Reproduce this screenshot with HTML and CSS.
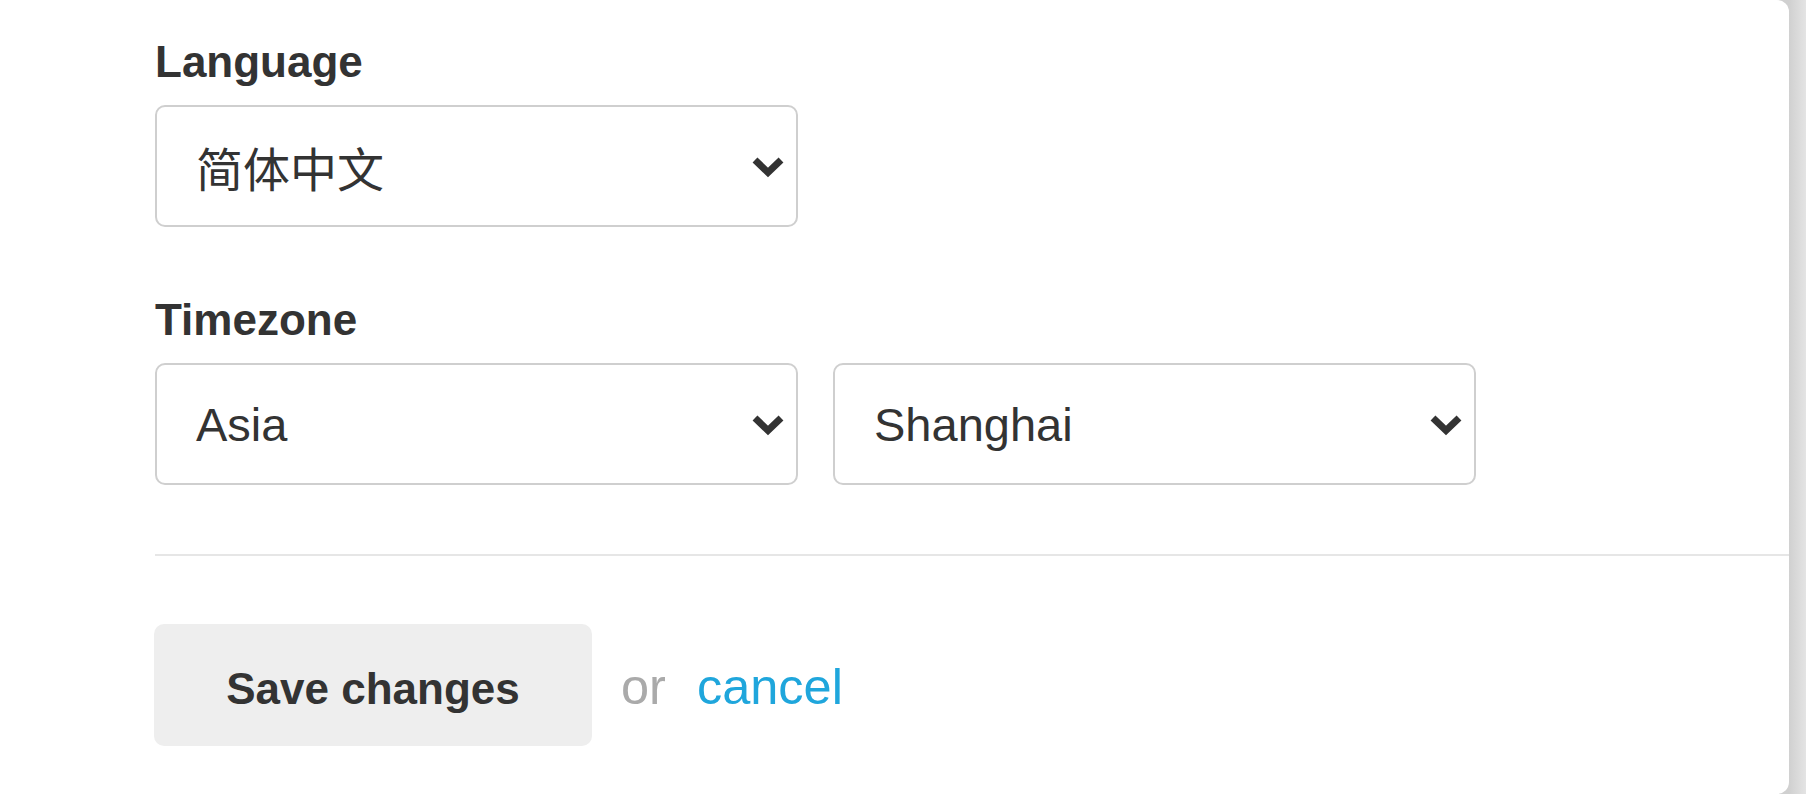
FILE: index.html
```html
<!DOCTYPE html>
<html lang="en">
<head>
<meta charset="utf-8">
<title>Settings</title>
<link rel="stylesheet" href="styles.css">
</head>
<body>
<div class="card">
  <div class="field">
    <div class="label">Language</div>
    <div class="select"><span class="value cjk">简体中文</span><svg class="chev" width="32" height="22" viewBox="0 0 32 22"><path d="M3 4 L16 16.5 L29 4" /></svg></div>
  </div>
  <div class="field">
    <div class="label">Timezone</div>
    <div class="row">
      <div class="select"><span class="value">Asia</span><svg class="chev" width="32" height="22" viewBox="0 0 32 22"><path d="M3 4 L16 16.5 L29 4" /></svg></div>
      <div class="select"><span class="value">Shanghai</span><svg class="chev" width="32" height="22" viewBox="0 0 32 22"><path d="M3 4 L16 16.5 L29 4" /></svg></div>
    </div>
  </div>
  <div class="divider"></div>
  <div class="actions">
    <div class="btn">Save changes</div>
    <span class="or">or</span>
    <a class="cancel" href="#">cancel</a>
  </div>
</div>
</body>
</html>
```
FILE: styles.css
```css
html, body {
  margin: 0;
  height: 794px;
  overflow: hidden;
}
body {
  background: linear-gradient(to right, #d0d0d0 1789px, #e4e4e4 100%);
  font-family: "Liberation Sans", Arial, "Noto Sans CJK SC", sans-serif;
  color: #333;
}
.card {
  width: 1789px;
  height: 794px;
  box-sizing: border-box;
  background: #fff;
  border-radius: 0 12px 12px 0;
  padding: 35px 0 0 155px;
}
.label {
  font-weight: bold;
  font-size: 44px;
  line-height: 53px;
  margin-bottom: 17px;
  color: #333;
}
.field + .field {
  margin-top: 66px;
}
.row {
  display: flex;
  gap: 35px;
}
.select {
  width: 643px;
  height: 122px;
  box-sizing: border-box;
  border: 2px solid #cfcfcf;
  border-radius: 10px;
  background: #fff;
  display: flex;
  align-items: center;
  padding: 0 12px 0 39px;
  font-size: 47px;
  color: #333;
}
.value {
  flex: 1;
}
.cjk {
  font-family: "Noto Sans CJK SC", sans-serif;
  font-weight: 400;
}
.chev {
  display: block;
  margin-top: 2px;
}
.chev path {
  fill: none;
  stroke: #333;
  stroke-width: 7;
}
.divider {
  margin-top: 69px;
  height: 2px;
  background: #e6e6e6;
}
.actions {
  margin-top: 68px;
  margin-left: -1px;
  display: flex;
  align-items: baseline;
}
.btn {
  width: 438px;
  height: 122px;
  box-sizing: border-box;
  padding-top: 7px;
  background: #eeeeee;
  border-radius: 10px;
  display: flex;
  align-items: center;
  justify-content: center;
  font-weight: bold;
  font-size: 44px;
  color: #333;
}
.or {
  margin-left: 29px;
  font-size: 50.5px;
  color: #aaaaaa;
}
.cancel {
  margin-left: 31px;
  font-size: 50.5px;
  color: #1fa6dc;
  text-decoration: none;
}
```
